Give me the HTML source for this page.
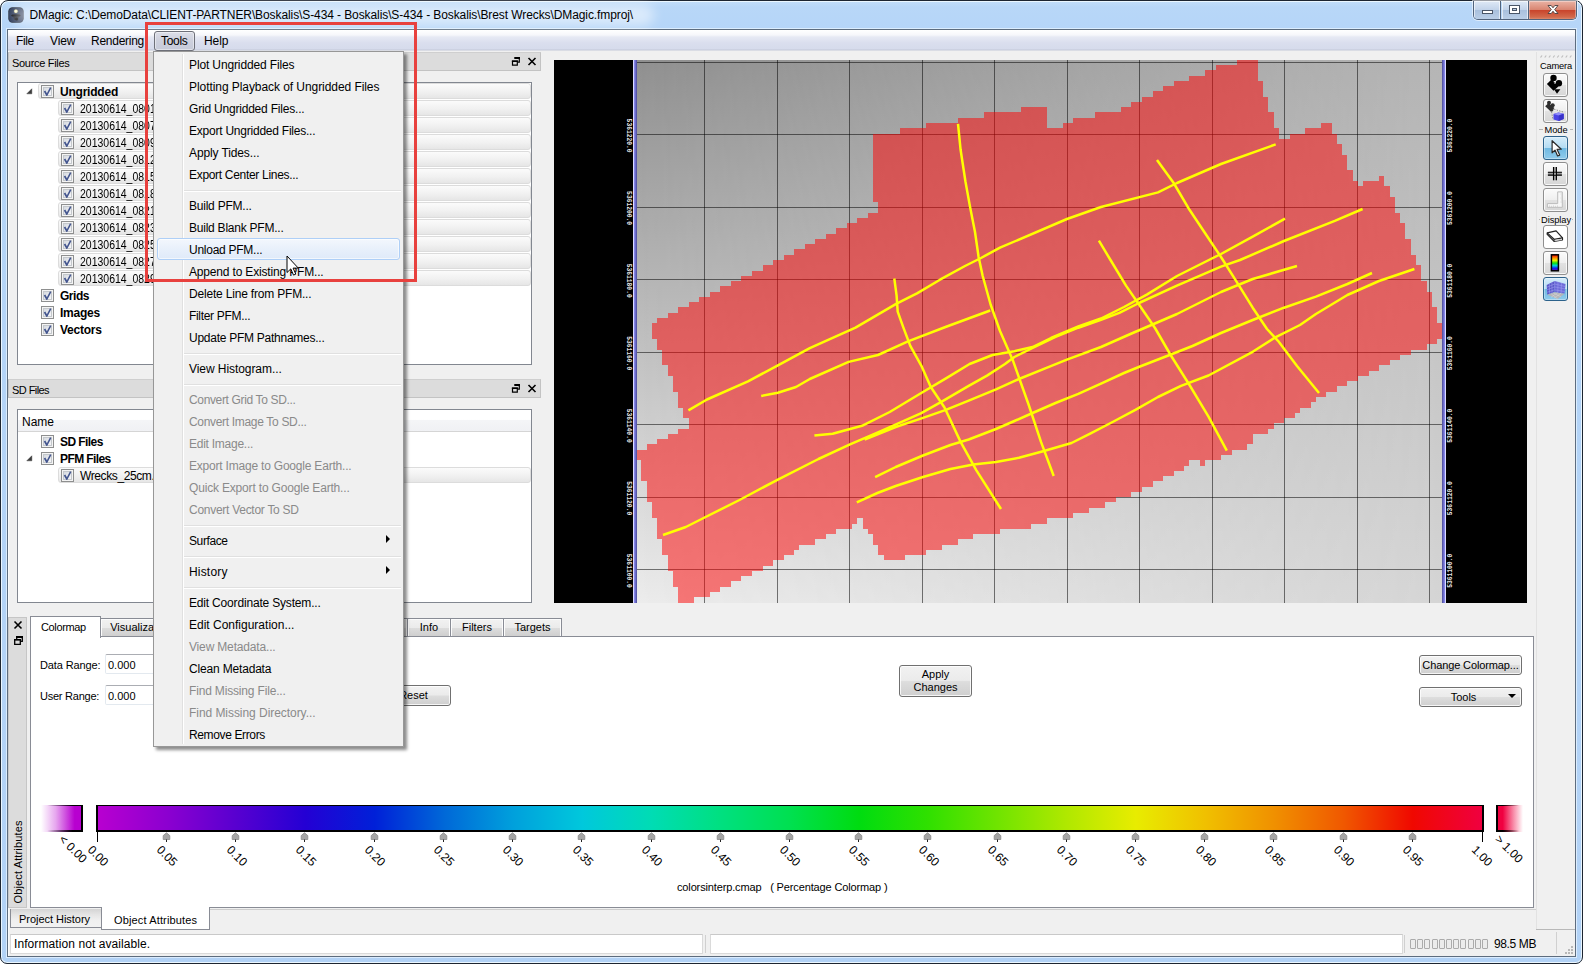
<!DOCTYPE html>
<html><head><meta charset="utf-8"><title>DMagic</title>
<style>
html,body{margin:0;padding:0}
body{width:1583px;height:964px;position:relative;overflow:hidden;background:#fff;font-family:"Liberation Sans",sans-serif;font-size:12px;color:#000;line-height:1}
div,span{box-sizing:border-box}
.a{position:absolute}
.t{position:absolute;white-space:pre;line-height:14px;height:14px}
.t11{font-size:11px}
/* window frame */
#frame{left:0;top:0;width:1583px;height:964px;border-radius:8px 8px 7px 7px;border:1px solid #1d2531;background:linear-gradient(#c2defa 0,#b8d7f8 6px,#b5d5f8 30px,#b2d2f6 964px);box-shadow:inset 0 0 0 1px rgba(240,250,255,.9)}
#client{left:7px;top:29px;width:1569px;height:928px;border:1px solid #5d6c7e;background:#f0f0f0;box-shadow:0 0 0 1px rgba(226,241,255,.85),inset 1px 0 0 #fafafa}
/* menubar */
#menubar{left:8px;top:30px;width:1567px;height:21px;background:linear-gradient(#ffffff 0,#f6f7fb 5px,#e6e9f4 7px,#dadeee 13px,#d6dbec 19px,#c3c8d8 20px,#f0f0f0 21px)}
.mi{position:absolute;top:34px;font-size:12px;line-height:14px;white-space:pre}
#toolsbtn{left:154px;top:31px;width:41px;height:20px;border:1px solid #6e7079;border-radius:3px;background:linear-gradient(#dcdee8,#cdd0dd 50%,#c6cad9);box-shadow:inset 0 0 0 1px rgba(255,255,255,.45)}
/* dock headers */
.dock{position:absolute;height:19px;background:#dcdcdc;border:1px solid #c3c3c3;border-top-color:#cfcfcf}
.tree{position:absolute;background:#fff;border:1px solid #828790}
.row{position:absolute;height:16px;border-radius:3px;border:1px solid #dcdcdc;background:linear-gradient(#fbfbfb,#f1f1f1 55%,#e6e6e6)}
.cb{position:absolute;width:13px;height:13px;border:1px solid #8e8f8f;background:#f4f4f4;box-shadow:inset 0 0 0 1px #f4f4f4,inset 0 0 0 2px #c4c8cc}
.cb:after{content:"";position:absolute;left:2px;top:2px;width:7px;height:7px;background:linear-gradient(135deg,#d6dae0,#f6f6f8)}
.cb svg{position:absolute;left:1px;top:1px;z-index:2}
.b{font-weight:bold}
.tr{transform:scaleX(.873);transform-origin:0 0}
/* popup menu */
#menu{left:153px;top:51px;width:251px;height:696px;background:#f0f0f0;border:1px solid #979797;box-shadow:3px 3px 3px rgba(0,0,0,.45)}
#gutter{left:28px;top:2px;width:2px;height:690px;border-left:1px solid #e0e0e0;border-right:1px solid #fff}
.m{position:absolute;left:35px;font-size:12px;line-height:14px;white-space:pre;color:#000}
.m.d{color:#8a8a8a}
.sep{position:absolute;left:30px;width:217px;height:2px;border-top:1px solid #e0e0e0;border-bottom:1px solid #fff}
.arr{position:absolute;left:232px;width:0;height:0;border-left:4px solid #000;border-top:4px solid transparent;border-bottom:4px solid transparent}
/* tabs */
.tab{position:absolute;top:618px;height:18px;border:1px solid #898c95;border-bottom:none;box-shadow:inset 1px 1px 0 #fcfcfc,inset -1px 0 0 #fcfcfc;background:linear-gradient(#f2f2f2,#ebebeb 50%,#dddddd 51%,#cfcfcf);font-size:11px;line-height:17px;text-align:center;white-space:pre}
.btn{position:absolute;border:1px solid #707070;border-radius:3px;background:linear-gradient(#f2f2f2,#ebebeb 48%,#dddddd 52%,#cfcfcf);box-shadow:inset 0 0 0 1px rgba(255,255,255,.8);font-size:11px;text-align:center;white-space:pre}
.fld{position:absolute;height:20px;border:1px solid #e3e9ef;border-top-color:#abadb3;border-radius:2px;background:#fff}
/* toolbar */
.tb{position:absolute;left:1543px;width:25px;height:24px;border:1px solid #8f8f8f;border-radius:3px;background:linear-gradient(#fbfbfb,#efefef 50%,#e2e2e2 51%,#d6d6d6);box-shadow:inset 0 0 0 1px rgba(255,255,255,.8)}
.tb.sel{border-color:#2c628b;background:linear-gradient(#d6edfa,#b4dcf3 48%,#6fb9e2 52%,#8fcbec);box-shadow:inset 0 0 0 1px rgba(255,255,255,.35)}
.tl{position:absolute;left:1537px;width:38px;text-align:center;font-size:9.3px;line-height:12px;white-space:pre}
#mi2{letter-spacing:-0.128px}#mi3{letter-spacing:-0.066px}#mi4{letter-spacing:-0.202px}#mi5{letter-spacing:-0.230px}#mi6{letter-spacing:-0.118px}#mi7{letter-spacing:-0.307px}#mi9{letter-spacing:-0.222px}#mi10{letter-spacing:-0.234px}#mi11{letter-spacing:-0.262px}#mi12{letter-spacing:-0.169px}#mi13{letter-spacing:-0.188px}#mi14{letter-spacing:-0.319px}#mi15{letter-spacing:-0.257px}#mi17{letter-spacing:-0.065px}#mi19{letter-spacing:-0.349px}#mi20{letter-spacing:-0.318px}#mi21{letter-spacing:-0.252px}#mi22{letter-spacing:-0.205px}#mi23{letter-spacing:-0.177px}#mi24{letter-spacing:-0.274px}#mi26{letter-spacing:-0.394px}#mi29{letter-spacing:0.179px}#mi32{letter-spacing:-0.178px}#mi33{letter-spacing:-0.000px}#mi34{letter-spacing:-0.167px}#mi35{letter-spacing:-0.174px}#mi36{letter-spacing:-0.167px}#mi37{letter-spacing:-0.052px}#mi38{letter-spacing:-0.368px}#title{letter-spacing:-0.095px}#mFile{letter-spacing:-0.411px}#mView{letter-spacing:-0.149px}#mRend{letter-spacing:-0.264px}#mTools{letter-spacing:-0.303px}#mHelp{letter-spacing:-0.072px}#srcTitle{letter-spacing:-0.303px}#status{letter-spacing:0.085px}#tabOA{letter-spacing:0.140px}#tabPH{letter-spacing:-0.035px}#trU{letter-spacing:-0.222px}#trGrids{letter-spacing:-0.469px}#trImages{letter-spacing:-0.227px}#trVectors{letter-spacing:-0.237px}#trSD{letter-spacing:-0.570px}#trPFM{letter-spacing:-0.602px}#nameHdr{letter-spacing:-0.004px}#trW{letter-spacing:-0.400px}#tabCm{letter-spacing:-0.361px}#lblData{letter-spacing:-0.124px}#lblUser{letter-spacing:-0.242px}#btnCC{letter-spacing:-0.120px}#cmapLbl{letter-spacing:-0.140px}#mem{letter-spacing:-0.372px}#sdTitle{letter-spacing:-0.570px}#tlCam{letter-spacing:-0.180px}#tlMode{letter-spacing:-0.066px}#tlDisp{letter-spacing:-0.069px}</style></head><body>
<div id="frame" class="a"></div>
<div id="client" class="a"></div>
<!-- title bar -->
<svg class="a" style="left:8px;top:7px" width="16" height="16" viewBox="0 0 16 16"><defs><radialGradient id="sp"><stop offset="0" stop-color="#fff"/><stop offset=".55" stop-color="#f6f2b8"/><stop offset="1" stop-color="#c9c787" stop-opacity=".2"/></radialGradient></defs><rect x=".3" y=".3" width="15.400" height="15.400" rx="4.200" fill="#1f2838"/><rect x="1" y="1" width="14" height="14" rx="3.600" fill="#2d3b59"/><circle cx="7.900" cy="4.200" r="2.300" fill="url(#sp)"/><ellipse cx="7.900" cy="8.600" rx="4.700" ry="1.300" fill="#0b0d12"/><path d="M5.200 9.500h5.600l-.9 3.300H6.100z" fill="#23262d"/><circle cx="8.700" cy="11.900" r="1.500" fill="#050608"/></svg>
<div class="a" style="left:14px;top:4px;width:640px;height:22px;border-radius:11px;background:rgba(255,255,255,.5);filter:blur(6px)"></div><div class="t" style="left:29.5px;top:8px;font-size:12px" id="title">DMagic: C:\DemoData\CLIENT-PARTNER\Boskalis\S-434 - Boskalis\S-434 - Boskalis\Brest Wrecks\DMagic.fmproj\</div>
<!-- window buttons -->
<div class="a" style="left:1473px;top:1px;width:104px;height:19px;border:1px solid #51637c;border-top:none;border-radius:0 0 5px 5px;overflow:hidden;box-shadow:0 0 0 1px rgba(255,255,255,.55)">
 <div class="a" style="left:0;top:0;width:27px;height:19px;background:linear-gradient(#dfe9f6,#c3d4ea 45%,#a9c0dd 50%,#bcd0e8);border-right:1px solid #51637c;box-shadow:inset 0 0 0 1px rgba(255,255,255,.6)"></div>
 <div class="a" style="left:28px;top:0;width:27px;height:19px;background:linear-gradient(#dfe9f6,#c3d4ea 45%,#a9c0dd 50%,#bcd0e8);border-right:1px solid #51637c;box-shadow:inset 0 0 0 1px rgba(255,255,255,.6)"></div>
 <div class="a" style="left:55px;top:0;width:47px;height:19px;background:linear-gradient(#e9b3a5,#d98672 45%,#c9452c 50%,#d26a4c 85%,#e09a80);box-shadow:inset 0 0 0 1px rgba(255,255,255,.35)"></div>
</div>
<svg class="a" style="left:1473px;top:0" width="104" height="20" viewBox="0 0 104 20"><rect x="9.5" y="10.5" width="10" height="3" fill="#fff" stroke="#4a5668" stroke-width="1"/><rect x="36.500" y="5.500" width="10" height="8" fill="#fff" stroke="#4a5668"/><rect x="39.500" y="8.500" width="4" height="2" fill="#b9cbe2" stroke="#4a5668"/><path d="M75 5.500h3.200l1.800 2.300 1.800-2.300H85l-3.300 4.100L85 13.500h-3.200L80 11.200l-1.800 2.300H75l3.300-3.900z" fill="#fff" stroke="#47403f" stroke-width=".9"/></svg>
<!-- menubar -->
<div id="menubar" class="a"></div>
<div id="toolsbtn" class="a"></div>
<div class="mi" style="left:16px" id="mFile">File</div>
<div class="mi" style="left:50px" id="mView">View</div>
<div class="mi" style="left:91px" id="mRend">Rendering</div>
<div class="mi" style="left:161px" id="mTools">Tools</div>
<div class="mi" style="left:204px" id="mHelp">Help</div>
<!-- Source Files dock -->
<div class="dock" style="left:8px;top:52px;width:533px"></div>
<div class="t t11" style="left:12px;top:56px" id="srcTitle">Source Files</div>
<svg class="a" style="left:511px;top:56px" width="26" height="11" viewBox="0 0 26 11"><g fill="none" stroke="#000" stroke-width="1.200"><path d="M3.900 1.700h4.400v4.400h-1.500"/><path d="M1.500 5h4.800v4.200H1.500z" fill="#dcdcdc"/><path d="M17.500 2l7 7M24.500 2l-7 7" stroke-width="1.600"/></g><path d="M3.300 1.100h5.600v1.800H3.300zM.9 4.400h6v1.700h-6z" fill="#000"/></svg>
<div class="tree" style="left:17px;top:82px;width:515px;height:283px"></div>
<!-- SD Files dock -->
<div class="dock" style="left:8px;top:379px;width:533px"></div>
<div class="t t11" style="left:12px;top:383px" id="sdTitle">SD Files</div>
<svg class="a" style="left:511px;top:383px" width="26" height="11" viewBox="0 0 26 11"><g fill="none" stroke="#000" stroke-width="1.200"><path d="M3.900 1.700h4.400v4.400h-1.500"/><path d="M1.500 5h4.800v4.200H1.500z" fill="#dcdcdc"/><path d="M17.500 2l7 7M24.500 2l-7 7" stroke-width="1.600"/></g><path d="M3.300 1.100h5.600v1.800H3.300zM.9 4.400h6v1.700h-6z" fill="#000"/></svg>
<div class="tree" style="left:17px;top:409px;width:515px;height:194px"></div>
<div class="a" style="left:18px;top:410px;width:513px;height:22px;background:linear-gradient(#fff,#fff 45%,#f4f5f7 50%,#f0f1f4);border-bottom:1px solid #d5d5d5"></div>
<div class="t" style="left:22px;top:415px" id="nameHdr">Name</div>
<div class="row" style="left:38px;top:83px;width:493px"></div><svg class="a" style="left:26px;top:88px" width="7" height="7" viewBox="0 0 7 7"><path d="M5.800 .8v5h-5z" fill="#3c3c3c" stroke="#3c3c3c" stroke-width=".5"/></svg><div class="cb" style="left:41px;top:85px"><svg width="11" height="11" viewBox="0 0 11 11"><path d="M.8 4.500l1.500-.9 1.600 2.600 3.100-5.900 1.400.7-4.200 7.900h-.8z" fill="#44568f"/></svg></div><div id="trU" class="t b" style="left:60px;top:85px">Ungridded</div><div class="row" style="left:58px;top:100px;width:473px"></div><div class="cb" style="left:61px;top:102px"><svg width="11" height="11" viewBox="0 0 11 11"><path d="M.8 4.500l1.500-.9 1.600 2.600 3.100-5.900 1.400.7-4.200 7.900h-.8z" fill="#44568f"/></svg></div><div class="t tr" style="left:80px;top:102px">20130614_080132.db</div><div class="row" style="left:58px;top:117px;width:473px"></div><div class="cb" style="left:61px;top:119px"><svg width="11" height="11" viewBox="0 0 11 11"><path d="M.8 4.500l1.500-.9 1.600 2.600 3.100-5.900 1.400.7-4.200 7.900h-.8z" fill="#44568f"/></svg></div><div class="t tr" style="left:80px;top:119px">20130614_080732.db</div><div class="row" style="left:58px;top:134px;width:473px"></div><div class="cb" style="left:61px;top:136px"><svg width="11" height="11" viewBox="0 0 11 11"><path d="M.8 4.500l1.500-.9 1.600 2.600 3.100-5.900 1.400.7-4.200 7.900h-.8z" fill="#44568f"/></svg></div><div class="t tr" style="left:80px;top:136px">20130614_080932.db</div><div class="row" style="left:58px;top:151px;width:473px"></div><div class="cb" style="left:61px;top:153px"><svg width="11" height="11" viewBox="0 0 11 11"><path d="M.8 4.500l1.500-.9 1.600 2.600 3.100-5.900 1.400.7-4.200 7.900h-.8z" fill="#44568f"/></svg></div><div class="t tr" style="left:80px;top:153px">20130614_081232.db</div><div class="row" style="left:58px;top:168px;width:473px"></div><div class="cb" style="left:61px;top:170px"><svg width="11" height="11" viewBox="0 0 11 11"><path d="M.8 4.500l1.500-.9 1.600 2.600 3.100-5.900 1.400.7-4.200 7.900h-.8z" fill="#44568f"/></svg></div><div class="t tr" style="left:80px;top:170px">20130614_081532.db</div><div class="row" style="left:58px;top:185px;width:473px"></div><div class="cb" style="left:61px;top:187px"><svg width="11" height="11" viewBox="0 0 11 11"><path d="M.8 4.500l1.500-.9 1.600 2.600 3.100-5.900 1.400.7-4.200 7.900h-.8z" fill="#44568f"/></svg></div><div class="t tr" style="left:80px;top:187px">20130614_081832.db</div><div class="row" style="left:58px;top:202px;width:473px"></div><div class="cb" style="left:61px;top:204px"><svg width="11" height="11" viewBox="0 0 11 11"><path d="M.8 4.500l1.500-.9 1.600 2.600 3.100-5.900 1.400.7-4.200 7.900h-.8z" fill="#44568f"/></svg></div><div class="t tr" style="left:80px;top:204px">20130614_082132.db</div><div class="row" style="left:58px;top:219px;width:473px"></div><div class="cb" style="left:61px;top:221px"><svg width="11" height="11" viewBox="0 0 11 11"><path d="M.8 4.500l1.500-.9 1.600 2.600 3.100-5.900 1.400.7-4.200 7.900h-.8z" fill="#44568f"/></svg></div><div class="t tr" style="left:80px;top:221px">20130614_082332.db</div><div class="row" style="left:58px;top:236px;width:473px"></div><div class="cb" style="left:61px;top:238px"><svg width="11" height="11" viewBox="0 0 11 11"><path d="M.8 4.500l1.500-.9 1.600 2.600 3.100-5.900 1.400.7-4.200 7.900h-.8z" fill="#44568f"/></svg></div><div class="t tr" style="left:80px;top:238px">20130614_082532.db</div><div class="row" style="left:58px;top:253px;width:473px"></div><div class="cb" style="left:61px;top:255px"><svg width="11" height="11" viewBox="0 0 11 11"><path d="M.8 4.500l1.500-.9 1.600 2.600 3.100-5.900 1.400.7-4.200 7.900h-.8z" fill="#44568f"/></svg></div><div class="t tr" style="left:80px;top:255px">20130614_082732.db</div><div class="row" style="left:58px;top:270px;width:473px"></div><div class="cb" style="left:61px;top:272px"><svg width="11" height="11" viewBox="0 0 11 11"><path d="M.8 4.500l1.500-.9 1.600 2.600 3.100-5.900 1.400.7-4.200 7.900h-.8z" fill="#44568f"/></svg></div><div class="t tr" style="left:80px;top:272px">20130614_082932.db</div><div class="cb" style="left:41px;top:289px"><svg width="11" height="11" viewBox="0 0 11 11"><path d="M.8 4.500l1.500-.9 1.600 2.600 3.100-5.900 1.400.7-4.200 7.900h-.8z" fill="#44568f"/></svg></div><div id="trGrids" class="t b" style="left:60px;top:289px">Grids</div><div class="cb" style="left:41px;top:306px"><svg width="11" height="11" viewBox="0 0 11 11"><path d="M.8 4.500l1.500-.9 1.600 2.600 3.100-5.900 1.400.7-4.200 7.900h-.8z" fill="#44568f"/></svg></div><div id="trImages" class="t b" style="left:60px;top:306px">Images</div><div class="cb" style="left:41px;top:323px"><svg width="11" height="11" viewBox="0 0 11 11"><path d="M.8 4.500l1.500-.9 1.600 2.600 3.100-5.900 1.400.7-4.200 7.900h-.8z" fill="#44568f"/></svg></div><div id="trVectors" class="t b" style="left:60px;top:323px">Vectors</div><div class="cb" style="left:41px;top:435px"><svg width="11" height="11" viewBox="0 0 11 11"><path d="M.8 4.500l1.500-.9 1.600 2.600 3.100-5.900 1.400.7-4.200 7.900h-.8z" fill="#44568f"/></svg></div><div id="trSD" class="t b" style="left:60px;top:435px">SD Files</div><svg class="a" style="left:26px;top:455px" width="7" height="7" viewBox="0 0 7 7"><path d="M5.800 .8v5h-5z" fill="#3c3c3c" stroke="#3c3c3c" stroke-width=".5"/></svg><div class="cb" style="left:41px;top:452px"><svg width="11" height="11" viewBox="0 0 11 11"><path d="M.8 4.500l1.500-.9 1.600 2.600 3.100-5.900 1.400.7-4.200 7.900h-.8z" fill="#44568f"/></svg></div><div id="trPFM" class="t b" style="left:60px;top:452px">PFM Files</div><div class="row" style="left:58px;top:467px;width:473px"></div><div class="cb" style="left:61px;top:469px"><svg width="11" height="11" viewBox="0 0 11 11"><path d="M.8 4.500l1.500-.9 1.600 2.600 3.100-5.900 1.400.7-4.200 7.900h-.8z" fill="#44568f"/></svg></div><div class="t" style="left:80px;top:469px"><span id="trW">Wrecks_25cm</span>.pfm</div>
<svg class="map" width="1583" height="964" viewBox="0 0 1583 964" style="position:absolute;left:0;top:0" shape-rendering="crispEdges"><defs><linearGradient id="gl" x1="0" y1="0" x2="0" y2="1"><stop offset="0" stop-color="#909090"/><stop offset="1" stop-color="#ececec"/></linearGradient><linearGradient id="gr" x1="0" y1="0" x2="0" y2="1"><stop offset="0" stop-color="#b5b5b5"/><stop offset="1" stop-color="#d5d5d5"/></linearGradient><linearGradient id="gm" x1="0" y1="0" x2="1" y2="0"><stop offset="0" stop-color="#000"/><stop offset="1" stop-color="#fff"/></linearGradient><mask id="mk" maskUnits="userSpaceOnUse" x="637" y="60" width="805" height="543"><rect x="637" y="60" width="805" height="543" fill="url(#gm)"/></mask><linearGradient id="bl" x1="0" y1="0" x2="1" y2="0"><stop offset="0" stop-color="#9090f8"/><stop offset="1" stop-color="#4a4a98"/></linearGradient><linearGradient id="br" x1="0" y1="0" x2="1" y2="0"><stop offset="0" stop-color="#4a4a98"/><stop offset="1" stop-color="#9090f8"/></linearGradient></defs><rect x="554" y="60" width="973" height="543" fill="#000"/><rect x="637" y="60" width="805" height="543" fill="url(#gl)"/><rect x="637" y="60" width="805" height="543" fill="url(#gr)" mask="url(#mk)"/><g fill="#000" fill-opacity="0.52"><rect x="704" y="60" width="1" height="543"/><rect x="777" y="60" width="1" height="543"/><rect x="849" y="60" width="1" height="543"/><rect x="922" y="60" width="1" height="543"/><rect x="994" y="60" width="1" height="543"/><rect x="1067" y="60" width="1" height="543"/><rect x="1139" y="60" width="1" height="543"/><rect x="1212" y="60" width="1" height="543"/><rect x="1284" y="60" width="1" height="543"/><rect x="1357" y="60" width="1" height="543"/><rect x="1429" y="60" width="1" height="543"/><rect x="637" y="134" width="805" height="1"/><rect x="637" y="207" width="805" height="1"/><rect x="637" y="279" width="805" height="1"/><rect x="637" y="352" width="805" height="1"/><rect x="637" y="424" width="805" height="1"/><rect x="637" y="497" width="805" height="1"/><rect x="637" y="569" width="805" height="1"/><rect x="637" y="62" width="805" height="1"/></g><path d="M1236.8 59.7H1257.9V65.0H1236.8ZM1215.7 65.0H1257.9V70.2H1215.7ZM1205.2 70.2H1257.9V75.5H1205.2ZM1189.3 75.5H1257.9V80.8H1189.3ZM1173.5 80.8H1263.1V86.0H1173.5ZM1163.0 86.0H1263.1V91.3H1163.0ZM1152.5 91.3H1263.1V96.6H1152.5ZM1141.9 96.6H1268.4V101.9H1141.9ZM1131.4 101.9H1268.4V107.1H1131.4ZM1020.7 107.1H1047.1V112.4H1020.7ZM1120.8 107.1H1268.4V112.4H1120.8ZM983.8 112.4H1047.1V117.7H983.8ZM1094.5 112.4H1273.7V117.7H1094.5ZM957.5 117.7H1047.1V122.9H957.5ZM1073.4 117.7H1273.7V122.9H1073.4ZM925.8 122.9H1047.1V128.2H925.8ZM1062.9 122.9H1273.7V128.2H1062.9ZM1321.1 122.9H1331.6V128.2H1321.1ZM899.5 128.2H1278.9V133.5H899.5ZM1305.3 128.2H1331.6V133.5H1305.3ZM873.1 133.5H1278.9V138.8H873.1ZM1289.5 133.5H1336.9V138.8H1289.5ZM873.1 138.8H1336.9V144.0H873.1ZM873.1 144.0H1342.2V149.3H873.1ZM873.1 149.3H1342.2V154.6H873.1ZM873.1 154.6H1347.4V159.8H873.1ZM873.1 159.8H1347.4V165.1H873.1ZM873.1 165.1H1347.4V170.4H873.1ZM873.1 170.4H1352.7V175.6H873.1ZM873.1 175.6H1352.7V180.9H873.1ZM1379.1 175.6H1384.3V180.9H1379.1ZM873.1 180.9H1358.0V186.2H873.1ZM1363.3 180.9H1384.3V186.2H1363.3ZM873.1 186.2H1389.6V191.4H873.1ZM873.1 191.4H1389.6V196.7H873.1ZM873.1 196.7H1394.9V202.0H873.1ZM878.4 202.0H1394.9V207.3H878.4ZM878.4 207.3H1394.9V212.5H878.4ZM867.9 212.5H1400.2V217.8H867.9ZM857.3 217.8H1400.2V223.1H857.3ZM846.8 223.1H1405.4V228.3H846.8ZM836.3 228.3H1405.4V233.6H836.3ZM825.7 233.6H1405.4V238.9H825.7ZM815.2 238.9H1410.7V244.1H815.2ZM804.6 244.1H1410.7V249.4H804.6ZM794.1 249.4H1410.7V254.7H794.1ZM783.6 254.7H1416.0V260.0H783.6ZM773.0 260.0H1416.0V265.2H773.0ZM762.5 265.2H1421.2V270.5H762.5ZM751.9 270.5H1421.2V275.8H751.9ZM741.4 275.8H1421.2V281.0H741.4ZM730.9 281.0H1426.5V286.3H730.9ZM720.3 286.3H1426.5V291.6H720.3ZM709.8 291.6H1431.8V296.8H709.8ZM699.2 296.8H1431.8V302.1H699.2ZM688.7 302.1H1431.8V307.4H688.7ZM678.2 307.4H1437.0V312.7H678.2ZM667.6 312.7H1437.0V317.9H667.6ZM657.1 317.9H1437.0V323.2H657.1ZM651.8 323.2H1442.3V328.5H651.8ZM651.8 328.5H1442.3V333.7H651.8ZM651.8 333.7H1442.3V339.0H651.8ZM657.1 339.0H1437.0V344.3H657.1ZM657.1 344.3H1426.5V349.5H657.1ZM662.4 349.5H1410.7V354.8H662.4ZM662.4 354.8H1400.2V360.1H662.4ZM662.4 360.1H1389.6V365.4H662.4ZM667.6 365.4H1379.1V370.6H667.6ZM667.6 370.6H1368.5V375.9H667.6ZM672.9 375.9H1358.0V381.2H672.9ZM672.9 381.2H1347.4V386.4H672.9ZM672.9 386.4H1336.9V391.7H672.9ZM678.2 391.7H1326.4V397.0H678.2ZM678.2 397.0H1315.8V402.2H678.2ZM678.2 402.2H1310.6V407.5H678.2ZM683.4 407.5H1300.0V412.8H683.4ZM683.4 412.8H1294.8V418.1H683.4ZM688.7 418.1H1284.2V423.3H688.7ZM688.7 423.3H1273.7V428.6H688.7ZM678.2 428.6H1268.4V433.9H678.2ZM667.6 433.9H1252.6V439.1H667.6ZM657.1 439.1H1252.6V444.4H657.1ZM646.5 444.4H1247.3V449.7H646.5ZM636.0 449.7H1231.5V454.9H636.0ZM636.0 454.9H1221.0V460.2H636.0ZM641.3 460.2H1189.3V465.5H641.3ZM1199.9 460.2H1205.2V465.5H1199.9ZM641.3 465.5H1184.1V470.8H641.3ZM641.3 470.8H1173.5V476.0H641.3ZM641.3 476.0H1163.0V481.3H641.3ZM646.5 481.3H1152.5V486.6H646.5ZM646.5 486.6H1141.9V491.8H646.5ZM646.5 491.8H1131.4V497.1H646.5ZM646.5 497.1H1115.6V502.4H646.5ZM651.8 502.4H1105.0V507.6H651.8ZM651.8 507.6H1089.2V512.9H651.8ZM651.8 512.9H1073.4V518.2H651.8ZM657.1 518.2H857.3V523.5H657.1ZM862.6 518.2H1047.1V523.5H862.6ZM657.1 523.5H852.1V528.7H657.1ZM862.6 523.5H1031.2V528.7H862.6ZM657.1 528.7H836.3V534.0H657.1ZM867.9 528.7H999.6V534.0H867.9ZM657.1 534.0H825.7V539.3H657.1ZM873.1 534.0H973.3V539.3H873.1ZM662.4 539.3H815.2V544.5H662.4ZM873.1 539.3H957.5V544.5H873.1ZM662.4 544.5H799.4V549.8H662.4ZM878.4 544.5H941.7V549.8H878.4ZM662.4 549.8H794.1V555.1H662.4ZM878.4 549.8H925.8V555.1H878.4ZM667.6 555.1H783.6V560.4H667.6ZM883.7 555.1H904.8V560.4H883.7ZM667.6 560.4H773.0V565.6H667.6ZM667.6 565.6H762.5V570.9H667.6ZM672.9 570.9H751.9V576.2H672.9ZM672.9 576.2H741.4V581.4H672.9ZM672.9 581.4H730.9V586.7H672.9ZM678.2 586.7H720.3V592.0H678.2ZM678.2 592.0H709.8V597.2H678.2ZM678.2 597.2H694.0V602.5H678.2Z" fill="#ff0000" fill-opacity="0.5"/><g fill="none" stroke="#ffff00" stroke-width="2.5" stroke-linejoin="round" stroke-linecap="butt" shape-rendering="auto"><polyline points="688.4,410.3 707.0,399.5 748.0,381.3 777.9,365.3 809.8,348.2 855.5,327.6 896.6,303.7 917.0,293.4 940.0,279.7 965.0,266.0 981.0,258.0 1000.0,247.7 1067.0,219.0 1101.0,207.0 1158.0,192.4 1177.0,183.0 1221.0,164.0 1275.7,144.4"/><polyline points="761.2,396.0 777.9,392.7 796.0,387.0 809.8,379.0 848.6,361.9 878.0,355.0 908.0,341.3 946.8,326.5 990.2,310.5"/><polyline points="814.4,435.4 832.6,433.8 862.0,425.8 889.7,412.0 921.7,392.7 946.8,377.9 969.6,364.0 992.5,355.0 1014.4,351.2 1032.6,347.0 1051.0,338.0 1078.3,326.5 1101.0,318.5 1124.0,307.0 1146.8,294.6 1177.0,276.0 1221.0,254.0 1252.7,236.6 1285.0,218.6"/><polyline points="663.0,535.0 685.8,527.0 701.6,519.0 739.5,500.0 777.4,479.8 818.5,459.0 850.0,444.4 877.4,432.7 920.8,413.3 941.3,401.9 968.7,385.9 987.0,375.6 1005.0,364.0 1014.4,357.0 1032.6,348.0 1055.5,336.8 1078.3,327.7 1101.0,319.7 1119.4,312.8 1139.0,303.0 1176.9,285.6 1221.0,266.6 1240.0,260.0 1284.0,241.0 1334.8,220.8 1362.6,209.0"/><polyline points="864.6,439.5 895.7,427.0 923.0,417.9 945.9,409.9 968.7,400.7 996.0,389.3 1019.0,379.0 1044.0,368.8 1066.9,359.6 1101.0,347.0 1132.7,333.0 1177.0,314.0 1221.0,292.0 1252.7,279.0 1297.0,266.0"/><polyline points="875.1,477.2 895.7,467.0 923.0,455.5 950.5,445.0 968.7,439.5 996.0,429.0 1014.4,421.0 1032.6,413.0 1055.5,403.0 1078.3,393.9 1101.0,383.6 1124.0,373.0 1140.0,366.5 1169.6,355.0 1192.5,346.0 1221.0,333.0 1252.7,320.0 1284.0,307.7 1315.9,296.6 1347.4,284.0 1372.0,273.0"/><polyline points="856.8,502.3 877.4,493.0 895.7,486.0 923.0,477.0 950.5,469.0 973.3,464.6 996.0,462.0 1019.0,457.8 1044.0,451.0 1071.5,443.0 1089.7,433.8 1112.6,422.0 1135.4,409.9 1158.0,397.0 1181.0,385.9 1208.5,375.5 1252.7,351.8 1274.8,337.6 1300.0,325.0 1315.9,314.0 1347.4,295.0 1379.0,281.0 1414.4,269.0"/><polyline points="894.3,278.5 896.6,295.7 897.7,311.6 903.4,327.6 910.3,345.9 921.7,366.4 930.8,387.0 944.5,407.5 960.6,441.9 976.4,470.3 1001.0,509.0"/><polyline points="958.0,123.9 960.6,149.8 965.4,181.3 970.0,206.6 975.0,232.0 978.6,257.0 982.7,276.0 990.6,304.5 1000.0,331.0 1012.6,359.7 1028.4,404.0 1041.0,441.9 1053.7,476.0"/><polyline points="1098.9,240.7 1110.5,260.0 1126.0,285.6 1139.0,304.5 1155.0,328.0 1170.6,355.0 1189.5,385.0 1208.5,416.6 1226.8,450.7"/><polyline points="1157.0,159.9 1173.7,183.0 1189.5,209.8 1205.3,233.5 1221.0,257.0 1237.0,282.4 1252.7,307.7 1267.0,329.0 1278.0,340.8 1297.0,366.0 1319.0,393.0"/></g><rect x="633" y="60" width="1" height="543" fill="#dcdcff"/><rect x="634" y="60" width="3" height="543" fill="url(#bl)"/><rect x="1442" y="60" width="3" height="543" fill="url(#br)"/><rect x="1445" y="60" width="1" height="543" fill="#dcdcff"/><g fill="#fff" fill-opacity="0.92" font-family="Liberation Mono, monospace" font-weight="bold" font-size="7.5px" shape-rendering="auto"><text transform="translate(627,118.6) rotate(90)" textLength="34" lengthAdjust="spacingAndGlyphs">5361220.0</text><text transform="translate(1452,152.6) rotate(-90)" textLength="34" lengthAdjust="spacingAndGlyphs">5361220.0</text><text transform="translate(627,191.1) rotate(90)" textLength="34" lengthAdjust="spacingAndGlyphs">5361200.0</text><text transform="translate(1452,225.1) rotate(-90)" textLength="34" lengthAdjust="spacingAndGlyphs">5361200.0</text><text transform="translate(627,263.7) rotate(90)" textLength="34" lengthAdjust="spacingAndGlyphs">5361180.0</text><text transform="translate(1452,297.7) rotate(-90)" textLength="34" lengthAdjust="spacingAndGlyphs">5361180.0</text><text transform="translate(627,336.2) rotate(90)" textLength="34" lengthAdjust="spacingAndGlyphs">5361160.0</text><text transform="translate(1452,370.2) rotate(-90)" textLength="34" lengthAdjust="spacingAndGlyphs">5361160.0</text><text transform="translate(627,408.7) rotate(90)" textLength="34" lengthAdjust="spacingAndGlyphs">5361140.0</text><text transform="translate(1452,442.7) rotate(-90)" textLength="34" lengthAdjust="spacingAndGlyphs">5361140.0</text><text transform="translate(627,481.2) rotate(90)" textLength="34" lengthAdjust="spacingAndGlyphs">5361120.0</text><text transform="translate(1452,515.2) rotate(-90)" textLength="34" lengthAdjust="spacingAndGlyphs">5361120.0</text><text transform="translate(627,553.8) rotate(90)" textLength="34" lengthAdjust="spacingAndGlyphs">5361100.0</text><text transform="translate(1452,587.8) rotate(-90)" textLength="34" lengthAdjust="spacingAndGlyphs">5361100.0</text></g></svg>
<!-- right toolbar -->
<div class="a" style="left:1536px;top:52px;width:39px;height:877px;background:#f0f0f0;border-left:1px solid #e2e2e2"></div>
<svg class="a" style="left:1539px;top:54px" width="34" height="5" viewBox="0 0 34 5"><g stroke="#bdbdbd" stroke-width="1.200"><path d="M1.5 3.500l1.500-2"/><path d="M5.7 3.500l1.500-2"/><path d="M9.9 3.500l1.500-2"/><path d="M14.1 3.500l1.500-2"/><path d="M18.3 3.500l1.500-2"/><path d="M22.5 3.500l1.500-2"/><path d="M26.7 3.500l1.500-2"/><path d="M30.9 3.500l1.500-2"/></g></svg>
<div class="tl" style="top:60px"><span id="tlCam">Camera</span></div>
<div class="tb" style="top:73px"><svg width="23" height="22" viewBox="0 0 23 22"><g fill="#000"><circle cx="9.500" cy="3.900" r="3.200"/><circle cx="14.900" cy="9.200" r="3.200"/><path d="M2.900 10l4.800-4.800 6.700 7.200-4.900 4.400z"/><path d="M10 15.200h6.400l-3.400 4.500z"/></g><path d="M9.600 8.200l2.200 1.100-1.200 .5z" fill="#e8e8e8"/></svg></div>
<div class="tb" style="top:99px"><svg width="23" height="22" viewBox="0 0 23 22"><g fill="#2e2e2e"><circle cx="5" cy="2.700" r="2"/><circle cx="8.700" cy="5.200" r="2"/><path d="M1.200 6.300l3.400-3.300 5.800 5-3.400 3.700z"/><path d="M6.500 9.500h3.500l-2.200 2.600z"/></g><path d="M7.600 12l1.300 7.500M10.200 9.300l8.800 2.600" stroke="#8a8a8a" stroke-width="1" stroke-dasharray="1.300 1.300" fill="none"/><path d="M9.500 14l5-1.600 5.200 1.400v5.200l-5 1.900-5.200-1.500z" fill="#4a42e6"/><path d="M9.500 14l5-1.600 5.200 1.400-5 1.700z" fill="#8f8bf7"/><path d="M14.700 15.500l5-1.700v5.200l-5 1.900z" fill="#3a32c8"/></svg></div>
<div class="a" style="left:1539px;top:129px;width:34px;height:1px;background:#b4b4b4"></div>
<div class="tl" style="top:124px"><span id="tlMode" style="background:#f0f0f0;padding:0 2px">Mode</span></div>
<div class="tb sel" style="top:136px"><svg width="23" height="22" viewBox="0 0 23 22"><path d="M8.100 3.700v12.100l2.900-2.700 2.600 5.900 2.100-.9-2.600-5.700 4.200-.2z" fill="#fff" stroke="#2b2b2b" stroke-width="1.200" stroke-linejoin="round"/></svg></div>
<div class="tb" style="top:162px"><svg width="23" height="22" viewBox="0 0 23 22"><path d="M11 4.100v13.100M3.900 10.700h14" stroke="#9c9c9c" stroke-width="3.600" fill="none"/><path d="M9.500 4.100v13.100M12.400 4.100v13.100M3.900 9.300h14M3.900 12.100h14" stroke="#000" stroke-width="1.100" fill="none"/><rect x="10" y="9.800" width="1.900" height="1.800" fill="#9c9c9c"/></svg></div>
<div class="tb" style="top:188px"><svg width="23" height="22" viewBox="0 0 23 22"><path d="M13.700 2.900h4.600v15.400H3.400v-3.700h10.300z" fill="#f7f7f7" stroke="#bcbcbc" stroke-width="1"/><path d="M5.500 18v-1.600M7.500 18v-1.200M9.500 18v-1.600M11.500 18v-1.200M13.500 18v-1.600M18 5h-1.500M18 7h-1.100M18 9h-1.500M18 11h-1.100M18 13h-1.500" stroke="#cfcfcf" stroke-width=".8"/></svg></div>
<div class="a" style="left:1539px;top:219px;width:34px;height:1px;background:#b4b4b4"></div>
<div class="tl" style="top:214px"><span id="tlDisp" style="background:#f0f0f0;padding:0 1px">Display</span></div>
<div class="tb" style="top:225px;background:#fff"><svg width="23" height="22" viewBox="0 0 23 22"><path d="M3.200 6.900l8.900-2 6.400 6.900v2l-8.400 1.500-6.900-6.900z" fill="#fff" stroke="#222" stroke-width="1.200" stroke-linejoin="round"/><path d="M3.200 6.900l6.900 6.400 8.400-1.500M10.100 13.300v2" fill="none" stroke="#222" stroke-width="1.200"/><path d="M10.600 14l7.400-1.300v1.200l-7.400 1.300z" fill="#cfcfcf"/></svg></div>
<div class="tb" style="top:251px"><svg width="23" height="22" viewBox="0 0 23 22"><defs><linearGradient id="rb" x1="0" y1="0" x2="0" y2="1"><stop offset="0" stop-color="#f00000"/><stop offset=".2" stop-color="#ff9000"/><stop offset=".35" stop-color="#f0f000"/><stop offset=".52" stop-color="#10e010"/><stop offset=".68" stop-color="#00d0e0"/><stop offset=".84" stop-color="#1020f0"/><stop offset="1" stop-color="#7000c0"/></linearGradient></defs><rect x="7.400" y="2.800" width="7" height="16" fill="url(#rb)" stroke="#000" stroke-width="1.500"/></svg></div>
<div class="tb sel" style="top:277px"><svg width="23" height="22" viewBox="0 0 23 22"><path d="M2.700 6.900l7.900-4v11.400l-7.400 2.400z" fill="#5a58c8"/><path d="M10.600 2.900l10.900 3-1 9.800-9.900-1.400z" fill="#6c6ad8"/><path d="M3.200 16.700l7.400-2.400 9.900 1.400-6.900 5.400z" fill="#b5b5b8"/><path d="M2.800 9.300l7.800-3.300 10.600 2.500M3 11.800l7.600-2.900 10.400 2M3.100 14.300l7.500-2.500 10.100 1.700M5.300 5.600l.3 10.400M7.900 4.300l.2 10.800M14 3.800l-.2 10.900M17.500 4.800l-.4 10.400" stroke="#9c9af0" stroke-width=".6" fill="none"/><path d="M6.800 15.500l7 5.600M9 14.800l8 4M13.500 14.700l-6.500 4.600M17 15.200l-7 5" stroke="#d8d8d8" stroke-width=".5" fill="none"/></svg></div>
<!-- bottom dock -->
<div class="a" style="left:8px;top:617px;width:19px;height:291px;background:#dcdcdc;border:1px solid #c6c6c6"></div>
<svg class="a" style="left:13px;top:620px" width="11" height="27" viewBox="0 0 11 27"><path d="M1.500 1.500l7 7M8.500 1.500l-7 7" stroke="#000" stroke-width="1.600" fill="none"/><g fill="none" stroke="#000" stroke-width="1.300"><rect x="3.700" y="16.700" width="5.600" height="4.600"/><path d="M1.700 19.700h5.600v4.600h-5.600z" fill="#dcdcdc"/></g><path d="M3 16h7v2h-7zM1 19h7v1.500h-7z" fill="#000"/></svg>
<div class="t t11" style="left:-32px;top:854.500px;width:100px;text-align:center;letter-spacing:.14px;transform:rotate(-90deg)" id="vtitle">Object Attributes</div>
<!-- tabs -->
<div class="tab" style="left:100px;width:82px">Visualization</div>
<div class="tab" style="left:176px;width:60px">Lighting</div>
<div class="tab" style="left:235px;width:60px">Shading</div>
<div class="tab" style="left:294px;width:114px">Geo-Referencing</div>
<div class="tab" style="left:407px;width:44px" id="tabInfo">Info</div>
<div class="tab" style="left:450px;width:54px" id="tabFilters">Filters</div>
<div class="tab" style="left:503px;width:59px" id="tabTargets">Targets</div>
<div class="a" style="left:30px;top:636px;width:1504px;height:272px;background:#fff;border:1px solid #898c95"></div>
<div class="a" style="left:30px;top:616px;width:71px;height:22px;background:#fff;border:1px solid #898c95;border-bottom:none"></div>
<div class="t t11" style="left:41px;top:620px" id="tabCm">Colormap</div>
<div class="t t11" style="left:40px;top:658px" id="lblData">Data Range:</div>
<div class="fld" style="left:105px;top:654px;width:120px"></div>
<div class="t t11" style="left:108px;top:658px">0.000</div>
<div class="t t11" style="left:40px;top:689px" id="lblUser">User Range:</div>
<div class="fld" style="left:105px;top:685px;width:120px"></div>
<div class="t t11" style="left:108px;top:689px">0.000</div>
<div class="btn" style="left:376px;top:685px;width:75px;height:21px;line-height:19px">Reset</div>
<div class="btn" style="left:899px;top:665px;width:73px;height:32px;line-height:13px;padding-top:2px">Apply
Changes</div>
<div class="btn" style="left:1419px;top:655px;width:103px;height:20px;line-height:18px" id="btnCC">Change Colormap...</div>
<div class="btn" style="left:1419px;top:687px;width:103px;height:20px;line-height:18px;padding-right:14px">Tools</div>
<div class="a" style="left:1508px;top:694px;width:0;height:0;border-top:4px solid #000;border-left:4px solid transparent;border-right:4px solid transparent"></div>
<!-- colour bar -->
<div class="a" style="left:41px;top:805px;width:42px;height:27px;background:linear-gradient(90deg,rgba(184,0,208,0) 0,rgba(184,0,208,.35) 35%,#b800d0 80%)"></div>
<div class="a" style="left:41px;top:805px;width:42px;height:27px;border:2px solid #000;border-top-width:1px;border-left:none;-webkit-mask-image:linear-gradient(90deg,transparent 0,transparent 15%,#000 75%);mask-image:linear-gradient(90deg,transparent 0,transparent 15%,#000 75%)"></div>
<div class="a" style="left:96px;top:805px;width:1388px;height:27px;border:2px solid #000;border-top-width:1px;background:linear-gradient(90deg,#b800d0 0,#8c00d0 5%,#5800d0 10%,#2400d4 15%,#0020d8 20%,#0068d8 25%,#00a0dc 30%,#00c8dc 35%,#00dcb4 40%,#00e080 45%,#00e050 50%,#00dc10 55%,#30e000 60%,#70e400 65%,#b0e800 70%,#e8ec00 75%,#f0c000 80%,#f09000 85%,#f05800 90%,#f00800 95%,#f00040 100%)"></div>
<div class="a" style="left:1496px;top:805px;width:27px;height:27px;background:linear-gradient(90deg,#f00040 0,#f00040 25%,rgba(240,0,64,.45) 65%,rgba(240,0,64,0) 100%)"></div>
<div class="a" style="left:1496px;top:805px;width:27px;height:27px;border:2px solid #000;border-top-width:1px;border-right:none;-webkit-mask-image:linear-gradient(90deg,#000 25%,transparent 85%);mask-image:linear-gradient(90deg,#000 25%,transparent 85%)"></div>
<div class="a" style="left:97px;top:832px;width:1px;height:10px;background:#000"></div><div class="a" style="left:1482px;top:832px;width:1px;height:10px;background:#000"></div><div class="t" style="left:68.1px;top:848.5px;width:60px;text-align:center;transform:rotate(45deg)">0.00</div><svg class="a" style="left:162.0px;top:832px" width="9" height="10" viewBox="0 0 9 10"><path d="M4.500 .8L7.800 3.600V7.500H1.200V3.600z" fill="#a5a5a5" stroke="#8a8a8a" stroke-width=".8"/><rect x="4" y="7.500" width="1" height="2.500" fill="#222"/></svg><div class="t" style="left:137.3px;top:848.5px;width:60px;text-align:center;transform:rotate(45deg)">0.05</div><svg class="a" style="left:231.2px;top:832px" width="9" height="10" viewBox="0 0 9 10"><path d="M4.500 .8L7.800 3.600V7.500H1.200V3.600z" fill="#a5a5a5" stroke="#8a8a8a" stroke-width=".8"/><rect x="4" y="7.500" width="1" height="2.500" fill="#222"/></svg><div class="t" style="left:206.5px;top:848.5px;width:60px;text-align:center;transform:rotate(45deg)">0.10</div><svg class="a" style="left:300.4px;top:832px" width="9" height="10" viewBox="0 0 9 10"><path d="M4.500 .8L7.800 3.600V7.500H1.200V3.600z" fill="#a5a5a5" stroke="#8a8a8a" stroke-width=".8"/><rect x="4" y="7.500" width="1" height="2.500" fill="#222"/></svg><div class="t" style="left:275.7px;top:848.5px;width:60px;text-align:center;transform:rotate(45deg)">0.15</div><svg class="a" style="left:369.6px;top:832px" width="9" height="10" viewBox="0 0 9 10"><path d="M4.500 .8L7.800 3.600V7.500H1.200V3.600z" fill="#a5a5a5" stroke="#8a8a8a" stroke-width=".8"/><rect x="4" y="7.500" width="1" height="2.500" fill="#222"/></svg><div class="t" style="left:344.9px;top:848.5px;width:60px;text-align:center;transform:rotate(45deg)">0.20</div><svg class="a" style="left:438.8px;top:832px" width="9" height="10" viewBox="0 0 9 10"><path d="M4.500 .8L7.800 3.600V7.500H1.200V3.600z" fill="#a5a5a5" stroke="#8a8a8a" stroke-width=".8"/><rect x="4" y="7.500" width="1" height="2.500" fill="#222"/></svg><div class="t" style="left:414.1px;top:848.5px;width:60px;text-align:center;transform:rotate(45deg)">0.25</div><svg class="a" style="left:508.1px;top:832px" width="9" height="10" viewBox="0 0 9 10"><path d="M4.500 .8L7.800 3.600V7.500H1.200V3.600z" fill="#a5a5a5" stroke="#8a8a8a" stroke-width=".8"/><rect x="4" y="7.500" width="1" height="2.500" fill="#222"/></svg><div class="t" style="left:483.4px;top:848.5px;width:60px;text-align:center;transform:rotate(45deg)">0.30</div><svg class="a" style="left:577.3px;top:832px" width="9" height="10" viewBox="0 0 9 10"><path d="M4.500 .8L7.800 3.600V7.500H1.200V3.600z" fill="#a5a5a5" stroke="#8a8a8a" stroke-width=".8"/><rect x="4" y="7.500" width="1" height="2.500" fill="#222"/></svg><div class="t" style="left:552.6px;top:848.5px;width:60px;text-align:center;transform:rotate(45deg)">0.35</div><svg class="a" style="left:646.5px;top:832px" width="9" height="10" viewBox="0 0 9 10"><path d="M4.500 .8L7.800 3.600V7.500H1.200V3.600z" fill="#a5a5a5" stroke="#8a8a8a" stroke-width=".8"/><rect x="4" y="7.500" width="1" height="2.500" fill="#222"/></svg><div class="t" style="left:621.8px;top:848.5px;width:60px;text-align:center;transform:rotate(45deg)">0.40</div><svg class="a" style="left:715.7px;top:832px" width="9" height="10" viewBox="0 0 9 10"><path d="M4.500 .8L7.800 3.600V7.500H1.200V3.600z" fill="#a5a5a5" stroke="#8a8a8a" stroke-width=".8"/><rect x="4" y="7.500" width="1" height="2.500" fill="#222"/></svg><div class="t" style="left:691.0px;top:848.5px;width:60px;text-align:center;transform:rotate(45deg)">0.45</div><svg class="a" style="left:784.9px;top:832px" width="9" height="10" viewBox="0 0 9 10"><path d="M4.500 .8L7.800 3.600V7.500H1.200V3.600z" fill="#a5a5a5" stroke="#8a8a8a" stroke-width=".8"/><rect x="4" y="7.500" width="1" height="2.500" fill="#222"/></svg><div class="t" style="left:760.2px;top:848.5px;width:60px;text-align:center;transform:rotate(45deg)">0.50</div><svg class="a" style="left:854.1px;top:832px" width="9" height="10" viewBox="0 0 9 10"><path d="M4.500 .8L7.800 3.600V7.500H1.200V3.600z" fill="#a5a5a5" stroke="#8a8a8a" stroke-width=".8"/><rect x="4" y="7.500" width="1" height="2.500" fill="#222"/></svg><div class="t" style="left:829.4px;top:848.5px;width:60px;text-align:center;transform:rotate(45deg)">0.55</div><svg class="a" style="left:923.3px;top:832px" width="9" height="10" viewBox="0 0 9 10"><path d="M4.500 .8L7.800 3.600V7.500H1.200V3.600z" fill="#a5a5a5" stroke="#8a8a8a" stroke-width=".8"/><rect x="4" y="7.500" width="1" height="2.500" fill="#222"/></svg><div class="t" style="left:898.6px;top:848.5px;width:60px;text-align:center;transform:rotate(45deg)">0.60</div><svg class="a" style="left:992.5px;top:832px" width="9" height="10" viewBox="0 0 9 10"><path d="M4.500 .8L7.800 3.600V7.500H1.200V3.600z" fill="#a5a5a5" stroke="#8a8a8a" stroke-width=".8"/><rect x="4" y="7.500" width="1" height="2.500" fill="#222"/></svg><div class="t" style="left:967.8px;top:848.5px;width:60px;text-align:center;transform:rotate(45deg)">0.65</div><svg class="a" style="left:1061.7px;top:832px" width="9" height="10" viewBox="0 0 9 10"><path d="M4.500 .8L7.800 3.600V7.500H1.200V3.600z" fill="#a5a5a5" stroke="#8a8a8a" stroke-width=".8"/><rect x="4" y="7.500" width="1" height="2.500" fill="#222"/></svg><div class="t" style="left:1037.0px;top:848.5px;width:60px;text-align:center;transform:rotate(45deg)">0.70</div><svg class="a" style="left:1130.9px;top:832px" width="9" height="10" viewBox="0 0 9 10"><path d="M4.500 .8L7.800 3.600V7.500H1.200V3.600z" fill="#a5a5a5" stroke="#8a8a8a" stroke-width=".8"/><rect x="4" y="7.500" width="1" height="2.500" fill="#222"/></svg><div class="t" style="left:1106.2px;top:848.5px;width:60px;text-align:center;transform:rotate(45deg)">0.75</div><svg class="a" style="left:1200.2px;top:832px" width="9" height="10" viewBox="0 0 9 10"><path d="M4.500 .8L7.800 3.600V7.500H1.200V3.600z" fill="#a5a5a5" stroke="#8a8a8a" stroke-width=".8"/><rect x="4" y="7.500" width="1" height="2.500" fill="#222"/></svg><div class="t" style="left:1175.5px;top:848.5px;width:60px;text-align:center;transform:rotate(45deg)">0.80</div><svg class="a" style="left:1269.4px;top:832px" width="9" height="10" viewBox="0 0 9 10"><path d="M4.500 .8L7.800 3.600V7.500H1.200V3.600z" fill="#a5a5a5" stroke="#8a8a8a" stroke-width=".8"/><rect x="4" y="7.500" width="1" height="2.500" fill="#222"/></svg><div class="t" style="left:1244.7px;top:848.5px;width:60px;text-align:center;transform:rotate(45deg)">0.85</div><svg class="a" style="left:1338.6px;top:832px" width="9" height="10" viewBox="0 0 9 10"><path d="M4.500 .8L7.800 3.600V7.500H1.200V3.600z" fill="#a5a5a5" stroke="#8a8a8a" stroke-width=".8"/><rect x="4" y="7.500" width="1" height="2.500" fill="#222"/></svg><div class="t" style="left:1313.9px;top:848.5px;width:60px;text-align:center;transform:rotate(45deg)">0.90</div><svg class="a" style="left:1407.8px;top:832px" width="9" height="10" viewBox="0 0 9 10"><path d="M4.500 .8L7.800 3.600V7.500H1.200V3.600z" fill="#a5a5a5" stroke="#8a8a8a" stroke-width=".8"/><rect x="4" y="7.500" width="1" height="2.500" fill="#222"/></svg><div class="t" style="left:1383.1px;top:848.5px;width:60px;text-align:center;transform:rotate(45deg)">0.95</div><div class="t" style="left:1452.3px;top:848.5px;width:60px;text-align:center;transform:rotate(45deg)">1.00</div><div class="t" style="left:43.0px;top:842.0px;width:60px;text-align:center;transform:rotate(45deg)">&lt; 0.00</div><div class="t" style="left:1479.0px;top:842.0px;width:60px;text-align:center;transform:rotate(45deg)">&gt; 1.00</div>
<div class="t t11" style="left:677px;top:880px" id="cmapLbl">colorsinterp.cmap   ( Percentage Colormap )</div>
<!-- bottom tabs -->
<div class="a" style="left:210px;top:909px;width:1326px;height:1px;background:#cdcdcd"></div>
<div class="a" style="left:10px;top:909px;width:92px;height:19px;border:1px solid #898c95;border-top:none;background:linear-gradient(#d4d4d4,#e4e4e4 30%,#efefef 60%,#f2f2f2)"></div>
<div class="t t11" style="left:19px;top:912px" id="tabPH">Project History</div>
<div class="a" style="left:101px;top:907px;width:109px;height:23px;border:1px solid #898c95;border-top:none;background:#fff"></div>
<div class="t t11" style="left:114px;top:913px" id="tabOA">Object Attributes</div>
<!-- status bar -->
<div class="a" style="left:10px;top:934px;width:693px;height:20px;background:#fff;border:1px solid #dadada;border-top-color:#c9c9c9"></div>
<div class="t" style="left:14px;top:937px" id="status">Information not available.</div>
<div class="a" style="left:705px;top:935px;width:1px;height:18px;background:#d0d0d0"></div>
<div class="a" style="left:710px;top:934px;width:693px;height:20px;background:#fff;border:1px solid #dadada;border-top-color:#c9c9c9"></div>
<div class="a" style="left:1404px;top:935px;width:1px;height:18px;background:#d0d0d0"></div>
<div class="a" style="left:1410.0px;top:939px;width:6px;height:10px;border:1px solid #ababab;border-radius:1px;background:#ececec"></div><div class="a" style="left:1417.2px;top:939px;width:6px;height:10px;border:1px solid #ababab;border-radius:1px;background:#ececec"></div><div class="a" style="left:1424.4px;top:939px;width:6px;height:10px;border:1px solid #ababab;border-radius:1px;background:#ececec"></div><div class="a" style="left:1431.6px;top:939px;width:6px;height:10px;border:1px solid #ababab;border-radius:1px;background:#ececec"></div><div class="a" style="left:1438.8px;top:939px;width:6px;height:10px;border:1px solid #ababab;border-radius:1px;background:#ececec"></div><div class="a" style="left:1446.0px;top:939px;width:6px;height:10px;border:1px solid #ababab;border-radius:1px;background:#ececec"></div><div class="a" style="left:1453.2px;top:939px;width:6px;height:10px;border:1px solid #ababab;border-radius:1px;background:#ececec"></div><div class="a" style="left:1460.4px;top:939px;width:6px;height:10px;border:1px solid #ababab;border-radius:1px;background:#ececec"></div><div class="a" style="left:1467.6px;top:939px;width:6px;height:10px;border:1px solid #ababab;border-radius:1px;background:#ececec"></div><div class="a" style="left:1474.8px;top:939px;width:6px;height:10px;border:1px solid #ababab;border-radius:1px;background:#ececec"></div><div class="a" style="left:1482.0px;top:939px;width:6px;height:10px;border:1px solid #ababab;border-radius:1px;background:#ececec"></div>
<div class="t" style="left:1494px;top:937px" id="mem">98.5 MB</div>
<div class="a" style="left:1556px;top:932px;width:1px;height:22px;background:#d0d0d0"></div><div class="a" style="left:1536px;top:929px;width:39px;height:1px;background:#b8b8b8"></div>
<svg class="a" style="left:1563px;top:944px" width="12" height="12" viewBox="0 0 12 12"><g fill="#b8b8b8"><rect x="8" y="2" width="2" height="2"/><rect x="5" y="5" width="2" height="2"/><rect x="8" y="5" width="2" height="2"/><rect x="2" y="8" width="2" height="2"/><rect x="5" y="8" width="2" height="2"/><rect x="8" y="8" width="2" height="2"/></g></svg>
<div id="menu" class="a"><div id="gutter" class="a"></div><div class="a" style="left:3px;top:186px;width:243px;height:22px;border:1px solid #aecff7;border-radius:3px;background:linear-gradient(#f3f7fd,#e8f0fb 50%,#dfeaf9);box-shadow:inset 0 0 0 1px rgba(255,255,255,.6)"></div><div id="mi2" class="m" style="top:6px">Plot Ungridded Files</div><div id="mi3" class="m" style="top:28px">Plotting Playback of Ungridded Files</div><div id="mi4" class="m" style="top:50px">Grid Ungridded Files...</div><div id="mi5" class="m" style="top:72px">Export Ungridded Files...</div><div id="mi6" class="m" style="top:94px">Apply Tides...</div><div id="mi7" class="m" style="top:116px">Export Center Lines...</div><div class="sep" style="top:138px"></div><div id="mi9" class="m" style="top:147px">Build PFM...</div><div id="mi10" class="m" style="top:169px">Build Blank PFM...</div><div id="mi11" class="m" style="top:191px">Unload PFM...</div><div id="mi12" class="m" style="top:213px">Append to Existing PFM...</div><div id="mi13" class="m" style="top:235px">Delete Line from PFM...</div><div id="mi14" class="m" style="top:257px">Filter PFM...</div><div id="mi15" class="m" style="top:279px">Update PFM Pathnames...</div><div class="sep" style="top:301px"></div><div id="mi17" class="m" style="top:310px">View Histogram...</div><div class="sep" style="top:332px"></div><div id="mi19" class="m d" style="top:341px">Convert Grid To SD...</div><div id="mi20" class="m d" style="top:363px">Convert Image To SD...</div><div id="mi21" class="m d" style="top:385px">Edit Image...</div><div id="mi22" class="m d" style="top:407px">Export Image to Google Earth...</div><div id="mi23" class="m d" style="top:429px">Quick Export to Google Earth...</div><div id="mi24" class="m d" style="top:451px">Convert Vector To SD</div><div class="sep" style="top:473px"></div><div id="mi26" class="m" style="top:482px">Surface</div><div class="arr" style="top:483px"></div><div class="sep" style="top:504px"></div><div id="mi29" class="m" style="top:513px">History</div><div class="arr" style="top:514px"></div><div class="sep" style="top:535px"></div><div id="mi32" class="m" style="top:544px">Edit Coordinate System...</div><div id="mi33" class="m" style="top:566px">Edit Configuration...</div><div id="mi34" class="m d" style="top:588px">View Metadata...</div><div id="mi35" class="m" style="top:610px">Clean Metadata</div><div id="mi36" class="m d" style="top:632px">Find Missing File...</div><div id="mi37" class="m d" style="top:654px">Find Missing Directory...</div><div id="mi38" class="m" style="top:676px">Remove Errors</div></div>
<div class="a" style="left:145px;top:22px;width:272px;height:260px;border:3px solid #e8413e"></div>
<svg class="a" style="left:286px;top:255px" width="14" height="22" viewBox="0 0 14 22"><path d="M1 1v16.500l3.800-3.600 2.700 6.200 2.300-1-2.700-6h5.200z" fill="#fff" stroke="#000" stroke-width="1" stroke-linejoin="miter"/></svg>
</body></html>
